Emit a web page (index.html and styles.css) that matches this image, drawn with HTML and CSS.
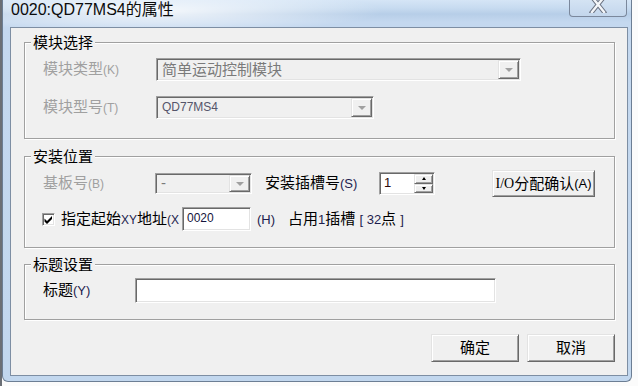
FILE: index.html
```html
<!DOCTYPE html>
<html lang="zh-CN">
<head>
    <meta charset="UTF-8">
    <title>0020:QD77MS4的属性</title>
    <link rel="stylesheet" href="styles.css">
</head>
<body>
    <div class="window">
        <div class="titlebar">
            <span class="title">0020:QD77MS4的属性</span>
            <span class="close">
                <svg width="18" height="13" viewBox="0 0 18 13">
                    <path d="M3 -3 L15 12 M15 -3 L3 12" stroke="#6a7180" stroke-width="4.4" stroke-linecap="square"/>
                    <path d="M3 -3 L15 12 M15 -3 L3 12" stroke="#f4f6f9" stroke-width="2.4" stroke-linecap="square"/>
                </svg>
            </span>
        </div>

        <div class="client">
            <fieldset class="group">
                <legend>模块选择</legend>
                <div class="row rowA">
                    <span class="label dis lw113">模块类型<span class="a">(K)</span></span>
                    <span class="combo c365">
                        <span class="val">简单运动控制模块</span>
                        <span class="drop"><i></i></span>
                    </span>
                </div>
                <div class="row rowB">
                    <span class="label dis lw113">模块型号<span class="a">(T)</span></span>
                    <span class="combo c218">
                        <span class="val mono">QD77MS4</span>
                        <span class="drop"><i></i></span>
                    </span>
                </div>
            </fieldset>

            <fieldset class="group g2">
                <legend>安装位置</legend>
                <div class="row rowC">
                    <span class="label dis lw112">基板号<span class="a">(B)</span></span>
                    <span class="combo c97">
                        <span class="val">-</span>
                        <span class="drop"><i></i></span>
                    </span>
                    <span class="label slot">安装插槽号<span class="a big">(S)</span></span>
                    <span class="spin">
                        <span class="num">1</span>
                        <span class="arrows">
                            <span class="up"><i></i></span>
                            <span class="down"><i></i></span>
                        </span>
                    </span>
                    <span class="btn io"><span class="serif">I/O</span>分配确认<span class="a big">(A)</span></span>
                </div>
                <div class="row rowD">
                    <span class="check">
                        <svg width="9" height="9" viewBox="0 0 9 9"><path d="M0.5 3.5 L3 6 L8 1 L8 4 L3 9 L0.5 6.5 Z" fill="#000"/></svg>
                    </span>
                    <span class="label addr">指定起始<span class="a">XY</span>地址<span class="a">(X</span></span>
                    <span class="field f69">0020</span>
                    <span class="label hex"><span class="a big">(H)</span></span>
                    <span class="label">占用<span class="a big">1</span>插槽 <span class="a big">[ 32</span>点 <span class="a big">]</span></span>
                </div>
            </fieldset>

            <fieldset class="group g3">
                <legend>标题设置</legend>
                <div class="row rowE">
                    <span class="label lw92">标题<span class="a big">(Y)</span></span>
                    <span class="field f361"></span>
                </div>
            </fieldset>

            <div class="buttons">
                <span class="btn ok">确定</span>
                <span class="btn ok">取消</span>
            </div>
        </div>
    </div>
</body>
</html>
```

FILE: styles.css
```css
* {
    margin: 0;
    padding: 0;
    box-sizing: border-box;
}

body {
    width: 638px;
    height: 386px;
    overflow: hidden;
    background: linear-gradient(90deg, #6b6f75 0, #6b6f75 2px, #fbfbfb 2px);
    font-family: "Liberation Sans", "Noto Sans CJK SC", sans-serif;
    font-size: 15px;
    line-height: 18px;
    color: #000;
}

/* window frame */
.window {
    margin-left: 2px;
    width: 630px;
    height: 382px;
    display: flex;
    flex-direction: column;
    padding: 0 3px 5px 7px;
    border: 1px solid #6c7e94;
    border-top: none;
    border-radius: 0 0 6px 6px;
    background:
        radial-gradient(ellipse 230px 22px at 150px 11px, rgba(255, 255, 255, 0.85), rgba(255, 255, 255, 0) 100%),
        linear-gradient(180deg, #d5e5f6 0, #c7dbf0 8px, #b7cee8 14px, #c4d8ef 22px, #c2d7ee 100%);
}

.titlebar {
    height: 27px;
    display: flex;
    align-items: flex-start;
}

.title {
    padding-left: 1px;
    font-size: 16px;
    line-height: 20px;
    color: #0c0c0c;
}

.close {
    margin-left: auto;
    margin-right: 1px;
    width: 58px;
    height: 17px;
    display: flex;
    justify-content: center;
    align-items: flex-start;
    border: 1px solid #7b889c;
    border-top: none;
    border-radius: 0 0 4px 4px;
    background: linear-gradient(180deg, #d4e3f3, #c3d6ec);
}

.client {
    flex: 1;
    display: flex;
    flex-direction: column;
    padding: 5px 12px 0 13px;
    border: 1px solid #7d8ea3;
    background: #f0f0f0;
}

/* group boxes */
.group {
    border: 1px solid #a0a0a0;
    box-shadow: 1px 1px 0 #fff, inset 1px 1px 0 #fff;
    padding: 0 12px 19px 6px;
}

.group legend {
    padding: 0 2px;
    background: #f0f0f0;
    line-height: 19px;
}

.g2 {
    margin-top: 8px;
    padding-bottom: 16px;
}

.g3 {
    margin-top: 7px;
    padding-bottom: 16px;
}

.row {
    display: flex;
    align-items: center;
    padding-left: 12px;
}

.rowA { margin-top: 6px; height: 23px; }
.rowB { margin-top: 15px; height: 23px; }
.rowC { margin-top: 4px; height: 27px; }
.rowD { margin-top: 10px; height: 24px; }
.rowE { margin-top: 4px; height: 25px; }

.label {
    white-space: nowrap;
    flex-shrink: 0;
}

.dis { color: #a0a0a0; }
.lw113 { width: 113px; }
.lw112 { width: 112px; }
.lw92 { width: 92px; }

.a {
    font-size: 12px;
    color: #1d1d4e;
}

.dis .a { color: #a0a0a0; }
.a.big { font-size: 13px; }

.serif {
    font-family: "Liberation Serif", serif;
    font-size: 14px;
}

/* combo boxes */
.combo {
    display: flex;
    padding: 1px;
    border: 1px solid;
    border-color: #a0a0a0 #fff #fff #a0a0a0;
    box-shadow: inset 1px 1px 0 #696969, inset -1px -1px 0 #e3e3e3;
    background: #f0f0f0;
    flex-shrink: 0;
}

.c365 { width: 365px; height: 23px; }
.c218 { width: 218px; height: 23px; }
.c97 { width: 97px; height: 21px; }

.combo .val {
    flex: 1;
    padding-left: 4px;
    color: #7a7a7a;
    line-height: 19px;
}

.c97 .val { line-height: 15px; }

.combo .mono {
    font-size: 12px;
    color: #55556a;
}

.drop, .arrows span {
    display: flex;
    justify-content: center;
    align-items: center;
    border: 1px solid;
    border-color: #e3e3e3 #696969 #696969 #e3e3e3;
    box-shadow: inset 1px 1px 0 #fff, inset -1px -1px 0 #a0a0a0;
    background: #f0f0f0;
}

.drop {
    width: 21px;
}

.drop i {
    border-left: 4px solid transparent;
    border-right: 4px solid transparent;
    border-top: 4px solid #a0a0a0;
}

/* spin box */
.label.slot {
    margin-left: 13px;
    width: 114px;
}

.spin {
    width: 56px;
    height: 23px;
    display: flex;
    padding: 1px;
    border: 1px solid;
    border-color: #a0a0a0 #fff #fff #a0a0a0;
    box-shadow: inset 1px 1px 0 #696969, inset -1px -1px 0 #e3e3e3;
    background: #fff;
    flex-shrink: 0;
}

.spin .num {
    flex: 1;
    padding: 1px 0 0 3px;
    font-size: 13px;
    line-height: 15px;
    color: #2a0a0a;
}

.arrows {
    width: 19px;
    display: flex;
    flex-direction: column;
}

.arrows span { flex: 1; }

.arrows .up i {
    border-left: 2.5px solid transparent;
    border-right: 2.5px solid transparent;
    border-bottom: 3px solid #000;
}

.arrows .down i {
    border-left: 2.5px solid transparent;
    border-right: 2.5px solid transparent;
    border-top: 3px solid #000;
}

/* push buttons */
.btn {
    display: flex;
    justify-content: center;
    align-items: center;
    border: 1px solid;
    border-color: #e3e3e3 #696969 #696969 #e3e3e3;
    box-shadow: inset 1px 1px 0 #fff, inset -1px -1px 0 #a0a0a0;
    background: #f0f0f0;
    white-space: nowrap;
    flex-shrink: 0;
}

.btn.io {
    margin-left: 57px;
    width: 103px;
    height: 27px;
}

.btn.io .a { color: #000; }

.buttons {
    display: flex;
    justify-content: flex-end;
    gap: 8px;
    margin-top: 14px;
}

.btn.ok {
    width: 88px;
    height: 28px;
}

/* checkbox and edit fields */
.check {
    width: 13px;
    height: 13px;
    margin-left: -1px;
    display: flex;
    justify-content: center;
    align-items: center;
    border: 1px solid;
    border-color: #a0a0a0 #fff #fff #a0a0a0;
    box-shadow: inset 1px 1px 0 #696969, inset -1px -1px 0 #e3e3e3;
    background: #fff;
    flex-shrink: 0;
}

.label.addr {
    margin-left: 6px;
    width: 121px;
}

.field {
    display: block;
    padding: 3px 0 0 4px;
    border: 1px solid;
    border-color: #a0a0a0 #fff #fff #a0a0a0;
    box-shadow: inset 1px 1px 0 #696969, inset -1px -1px 0 #e3e3e3;
    background: #fff;
    font-size: 12px;
    line-height: 15px;
    color: #14143c;
    flex-shrink: 0;
}

.f69 { width: 69px; height: 24px; }
.f361 { width: 361px; height: 25px; }

.label.hex {
    margin-left: 6px;
    width: 31px;
}
```
